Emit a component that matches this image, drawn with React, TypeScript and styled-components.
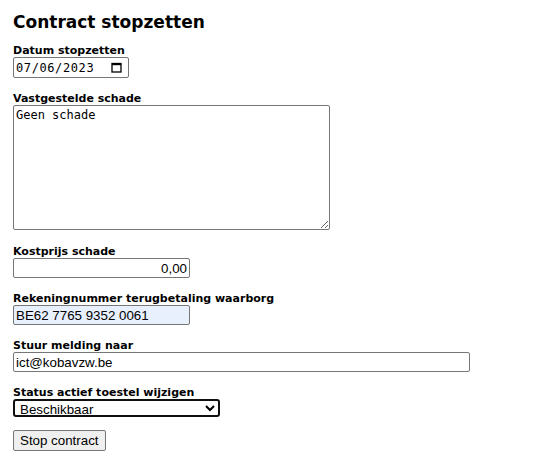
import { createGlobalStyle, styled } from 'styled-components';

const GlobalStyle = createGlobalStyle`
  html, body {
    margin: 0;
    padding: 0;
    background: #ffffff;
  }
  body {
    font-family: "DejaVu Sans", Verdana, sans-serif;
    color: #000000;
  }
`;

const Page = styled.main`
  padding: 11px 13px 10px;
`;

const Title = styled.h1`
  margin: 0 0 11px;
  font-family: "DejaVu Sans", Verdana, sans-serif;
  font-size: 17px;
  font-weight: bold;
  line-height: 22px;
`;

const Form = styled.form`
  display: flex;
  flex-direction: column;
  align-items: flex-start;
`;

const Field = styled.div<{ $gap?: number }>`
  display: flex;
  flex-direction: column;
  align-items: flex-start;
  margin-bottom: ${({ $gap }) => $gap ?? 14}px;
`;

const Label = styled.label`
  font-family: "DejaVu Sans", Verdana, sans-serif;
  font-size: 11px;
  font-weight: bold;
  line-height: 13px;
`;

const baseControl = `
  box-sizing: border-box;
  margin: 0;
  border: 1px solid #767676;
  border-radius: 2px;
  color: #000000;
  outline: none;
`;

const TextInput = styled.input<{ $width: number; $align?: string; $filled?: boolean }>`
  ${baseControl}
  width: ${({ $width }) => $width}px;
  height: 20px;
  padding: 1px 2px;
  font-family: "Liberation Sans", Arial, sans-serif;
  font-size: 13.33px;
  text-align: ${({ $align }) => $align || 'left'};
  background: ${({ $filled }) => ($filled ? '#e8f0fe' : '#ffffff')};
`;

const DateBox = styled.div`
  ${baseControl}
  display: flex;
  align-items: center;
  width: 116px;
  height: 21px;
  padding: 0 6px 0 2px;
  background: #ffffff;
`;

const DateText = styled.input`
  flex: 1;
  min-width: 0;
  border: none;
  padding: 0;
  margin: 0;
  outline: none;
  background: transparent;
  font-family: "DejaVu Sans Mono", monospace;
  font-size: 12px;
  letter-spacing: 0.6px;
  color: #000000;
`;

const TextArea = styled.textarea`
  ${baseControl}
  width: 317px;
  height: 125px;
  padding: 2px;
  font-family: "DejaVu Sans Mono", monospace;
  font-size: 12px;
  line-height: 15px;
  resize: both;
  background: #ffffff;
`;

const Select = styled.select`
  box-sizing: border-box;
  margin: 0;
  width: 207px;
  height: 18px;
  padding: 0 0 0 1px;
  border: 2px solid #101010;
  border-radius: 3px;
  font-family: "Liberation Sans", Arial, sans-serif;
  font-size: 13.33px;
  background: #ffffff;
  color: #000000;
  outline: none;
`;

const Button = styled.button`
  box-sizing: border-box;
  margin: 0;
  height: 21px;
  padding: 1px 6px;
  border: 1px solid #767676;
  border-radius: 2px;
  background: #efefef;
  font-family: "Liberation Sans", Arial, sans-serif;
  font-size: 13.33px;
  color: #000000;
`;

const CalendarIcon = () => (
  <svg width="11" height="11" viewBox="0 0 11 11" aria-hidden="true">
    <rect x="1" y="1.5" width="9" height="8.5" fill="none" stroke="#000" strokeWidth="1.3" />
    <rect x="1" y="1" width="9" height="2.2" fill="#000" />
  </svg>
);

const App = () => {
  return (
    <Page>
      <GlobalStyle />
      <Title>Contract stopzetten</Title>
      <Form onSubmit={(e) => e.preventDefault()}>
        <Field>
          <Label htmlFor="datum">Datum stopzetten</Label>
          <DateBox>
            <DateText id="datum" defaultValue="07/06/2023" />
            <CalendarIcon />
          </DateBox>
        </Field>
        <Field $gap={15}>
          <Label htmlFor="schade">Vastgestelde schade</Label>
          <TextArea id="schade" defaultValue="Geen schade" />
        </Field>
        <Field>
          <Label htmlFor="kostprijs">Kostprijs schade</Label>
          <TextInput id="kostprijs" $width={177} $align="right" defaultValue="0,00" />
        </Field>
        <Field>
          <Label htmlFor="rekening">Rekeningnummer terugbetaling waarborg</Label>
          <TextInput id="rekening" $width={177} $filled defaultValue="BE62 7765 9352 0061" />
        </Field>
        <Field>
          <Label htmlFor="melding">Stuur melding naar</Label>
          <TextInput id="melding" $width={457} defaultValue="ict@kobavzw.be" />
        </Field>
        <Field $gap={13}>
          <Label htmlFor="status">Status actief toestel wijzigen</Label>
          <Select id="status" defaultValue="beschikbaar">
            <option value="beschikbaar">Beschikbaar</option>
            <option value="defect">Defect</option>
            <option value="uitgeleend">Uitgeleend</option>
          </Select>
        </Field>
        <Button type="submit">Stop contract</Button>
      </Form>
    </Page>
  );
};

export default App;
